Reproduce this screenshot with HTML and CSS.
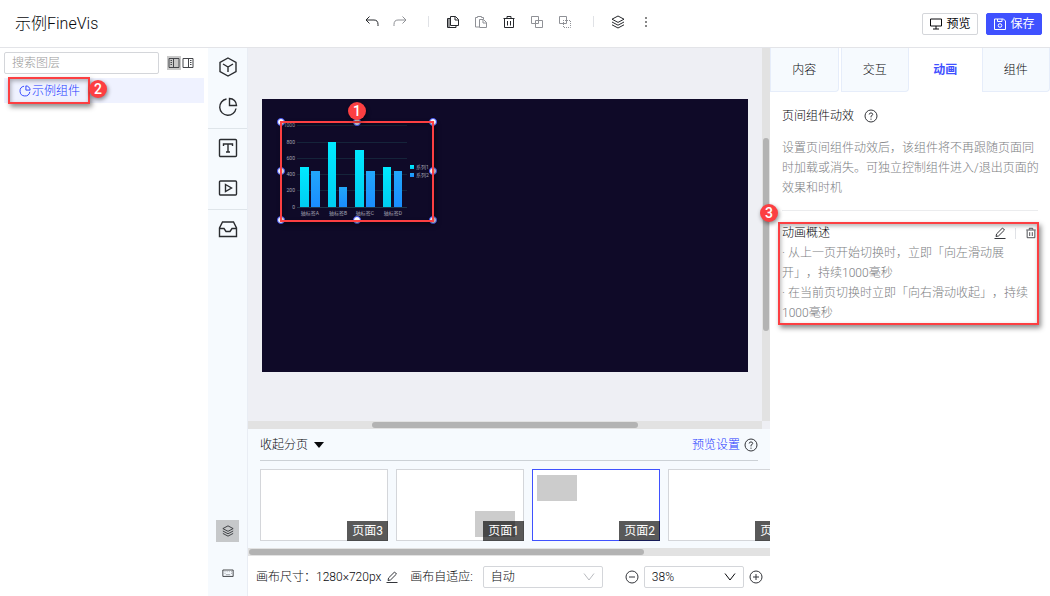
FILE: index.html
```html
<!DOCTYPE html>
<html lang="zh-CN">
<head>
    <meta charset="UTF-8">
    <meta name="viewport" content="width=device-width, initial-scale=1.0">
    <title>示例FineVis</title>
    <link rel="stylesheet" href="styles.css">
</head>
<body>
    <!-- 公用图标 -->
    <svg class="sprite" aria-hidden="true">
        <symbol id="i-pie" viewBox="0 0 20 20"><path d="M8.5 2A8.2 8.2 0 1 0 18 11.5M11.500 1.500V8.500H18.500A7 7 0 0 0 11.500 1.500Z"/></symbol>
        <symbol id="i-trash" viewBox="0 0 14 14"><path d="M1.500 3.500H12.500M5 3V1.500H9V3M2.500 4V12.500H11.500V4M5.500 6V10.500M8.500 6V10.500"/></symbol>
        <symbol id="i-layers" viewBox="0 0 14 14"><path d="M7 1L13 4.200L7 7.400L1 4.200ZM1 7L7 10.200L13 7M1 9.800L7 13L13 9.800"/></symbol>
        <symbol id="i-pencil" viewBox="0 0 12 12"><path d="M2 9.500L2.600 6.900L8.500 1L10.500 3L4.600 8.900ZM0.500 11.500H11.500"/></symbol>
        <symbol id="i-help" viewBox="0 0 14 14"><circle cx="7" cy="7" r="6"/><path d="M5.200 5.500Q5.300 3.900 7 3.900Q8.800 4 8.700 5.500Q8.600 6.400 7 7.200V8.400M7 9.600V10.800"/></symbol>
        <symbol id="i-down" viewBox="0 0 12 12"><path d="M1 2.500L6 9L11 2.500"/></symbol>
    </svg>

    <header class="topbar">
        <h1 class="doc-title">示例FineVis</h1>
        <div class="tools">
            <button class="tool" aria-label="撤销"><svg viewBox="0 0 14 14"><path d="M4.500 1.500L1 5L4.500 8.500M1 5H9Q13 5 13 9.500V11"/></svg></button>
            <button class="tool off" aria-label="重做"><svg viewBox="0 0 14 14"><path d="M9.500 1.500L13 5L9.500 8.500M13 5H5Q1 5 1 9.500V11"/></svg></button>
            <span class="sep"></span>
            <button class="tool" aria-label="复制"><svg viewBox="0 0 14 14"><path d="M4.500 1.500H9.500L12.500 4.500V10.500H4.500ZM9 1.500V5H12.500M4 3.500H1.500V12.500H10V11M3 3.500V12"/></svg></button>
            <button class="tool off" aria-label="粘贴"><svg viewBox="0 0 14 14"><path d="M5 12H1.500V2.500H3.500V1.500H7.500V2.500H9.500V4M5.500 4.500H9.500L12.500 7.500V12.500H5.500ZM9 4.500V8H12.500"/></svg></button>
            <button class="tool" aria-label="删除"><svg><use href="#i-trash"/></svg></button>
            <button class="tool off" aria-label="组合"><svg viewBox="0 0 14 14"><path d="M1.500 1.500H8.500V8.500H1.500ZM5.500 5.500H12.500V12.500H5.500Z"/></svg></button>
            <button class="tool off" aria-label="取消组合"><svg viewBox="0 0 14 14"><path d="M1.500 1.500H8.500V8.500H1.500Z"/><path stroke-dasharray="1 1" d="M5 5.500H12.500V12.500H5.500V5"/></svg></button>
            <span class="sep"></span>
            <button class="tool" aria-label="图层"><svg><use href="#i-layers"/></svg></button>
            <button class="tool" aria-label="更多"><svg class="dots" viewBox="0 0 14 14"><path d="M6 2H8V4H6ZM6 6H8V8H6ZM6 10H8V12H6Z"/></svg></button>
        </div>
        <div class="actions">
            <button class="btn"><svg viewBox="0 0 14 14"><path d="M1.500 2H12.500V9H1.500ZM7 9V12M4 12H10"/></svg>预览</button>
            <button class="btn primary"><svg viewBox="0 0 14 14"><path d="M1.500 2H10.500L12.500 4V12.500H1.500ZM4.500 2V4.500H9V2"/><circle cx="7" cy="8.500" r="1.800"/></svg>保存</button>
        </div>
    </header>

    <main class="workspace">
        <aside class="layers">
            <div class="search-row">
                <input class="search" type="text" placeholder="搜索图层" aria-label="搜索图层">
                <button class="dock active" aria-label="停靠左侧"><svg viewBox="0 0 12 12"><path d="M1 1.500H11V10.500H1ZM5.500 1.500V10.500M2.500 3.500H4M2.500 5.500H4M2.500 7.500H4"/></svg></button>
                <button class="dock" aria-label="停靠右侧"><svg viewBox="0 0 12 12"><path d="M1 1.500H11V10.500H1ZM6.500 1.500V10.500M8 3.500H9.500M8 5.500H9.500M8 7.500H9.500"/></svg></button>
            </div>
            <button class="layer-item">
                <svg><use href="#i-pie"/></svg>示例组件
                <span class="callout callout-layer"></span>
                <span class="badge badge-layer">2</span>
            </button>
        </aside>

        <nav class="rail">
            <div class="rail-group">
                <button aria-label="模型"><svg viewBox="0 0 20 20"><path d="M10 1L18 5.500V14.500L10 19L2 14.500V5.500ZM5 7L10 10L15 7M10 10V15"/></svg></button>
                <button aria-label="图表"><svg><use href="#i-pie"/></svg></button>
            </div>
            <div class="rail-group">
                <button aria-label="文本"><svg viewBox="0 0 20 20"><rect x="1.500" y="1.500" width="17" height="17" rx="1"/><path d="M5.500 8V6H14.500V8M10 6V14M8 14H12"/></svg></button>
                <button aria-label="媒体"><svg viewBox="0 0 20 20"><rect x="1.500" y="3" width="17" height="14" rx="1"/><path d="M7.500 6.500L13.500 10L7.500 13.500Z"/></svg></button>
            </div>
            <div class="rail-group">
                <button aria-label="资源"><svg viewBox="0 0 20 20"><path d="M4.500 3H15.500L18.500 9V17.500H1.500V9ZM1.500 9.500H6L8 12.500H12L14 9.500H18.500"/></svg></button>
            </div>
            <div class="rail-bottom">
                <button class="active" aria-label="图层面板"><svg><use href="#i-layers"/></svg></button>
                <button aria-label="快捷键"><svg viewBox="0 0 14 14"><path d="M1 3.500H13V11H1Z"/><path class="faint" d="M3 5.500H4M5.500 5.500H6.500M8 5.500H9M10.500 5.500H11.500M3 7.500H4M10.500 7.500H11.500M4.500 9H9.500"/></svg></button>
            </div>
        </nav>

        <section class="editor">
            <div class="canvas">
                <div class="stage-wrap">
                    <div class="stage">
                        <div class="widget">
                            <svg class="chart" viewBox="0 0 152 98">
                                <defs>
                                    <linearGradient id="cyan" x2="0" y2="1"><stop stop-color="#00eaff"/><stop offset="1" stop-color="#00cdf2"/></linearGradient>
                                    <linearGradient id="blue" x2="0" y2="1"><stop stop-color="#22a7fa"/><stop offset="1" stop-color="#1a8dff"/></linearGradient>
                                </defs>
                                <path class="grid" d="M16 3.500H126M16 20.500H126M16 36.500H126M16 52.500H126M16 68.500H126"/>
                                <path class="axis" d="M16 85.500H126"/>
                                <g fill="url(#cyan)">
                                    <rect x="19" y="45" width="9" height="40"/>
                                    <rect x="47" y="20" width="8" height="65"/>
                                    <rect x="74" y="28" width="9" height="57"/>
                                    <rect x="102" y="45" width="8" height="40"/>
                                    <rect x="129" y="43" width="4" height="4"/>
                                </g>
                                <g fill="url(#blue)">
                                    <rect x="30" y="49" width="9" height="36"/>
                                    <rect x="58" y="65" width="8" height="20"/>
                                    <rect x="85" y="49" width="9" height="36"/>
                                    <rect x="113" y="49" width="8" height="36"/>
                                    <rect x="129" y="51" width="4" height="4"/>
                                </g>
                                <g class="y-labels">
                                    <text x="14" y="5">1000</text>
                                    <text x="14" y="22">800</text>
                                    <text x="14" y="38">600</text>
                                    <text x="14" y="54">400</text>
                                    <text x="14" y="70">200</text>
                                    <text x="14" y="87">0</text>
                                </g>
                                <g class="x-labels">
                                    <text x="29" y="93">轴标签A</text>
                                    <text x="57" y="93">轴标签B</text>
                                    <text x="84" y="93">轴标签C</text>
                                    <text x="112" y="93">轴标签D</text>
                                </g>
                                <g class="legend">
                                    <text x="135" y="47">系列1</text>
                                    <text x="135" y="55">系列2</text>
                                </g>
                            </svg>
                            <i class="handle tl"></i><i class="handle tc"></i><i class="handle tr"></i>
                            <i class="handle ml"></i><i class="handle mr"></i>
                            <i class="handle bl"></i><i class="handle bc"></i><i class="handle br"></i>
                            <span class="callout callout-widget"></span>
                            <span class="badge badge-widget">1</span>
                        </div>
                    </div>
                </div>
                <div class="vbar"><span class="vthumb"></span></div>
                <div class="hbar"><span class="hthumb canvas-thumb"></span></div>
            </div>

            <div class="pages">
                <div class="pages-head">
                    <button class="collapse">收起分页 <svg viewBox="0 0 10 6"><path d="M0 0H10L5 6Z"/></svg></button>
                    <a class="preview-link" href="#">预览设置</a>
                    <svg class="help"><use href="#i-help"/></svg>
                </div>
                <div class="page-list">
                    <button class="page"><span class="page-name">页面3</span></button>
                    <button class="page"><span class="block block-br"></span><span class="page-name">页面1</span></button>
                    <button class="page current"><span class="block block-tl"></span><span class="page-name">页面2</span></button>
                    <button class="page"><span class="page-name">页面4</span></button>
                </div>
                <div class="hbar"><span class="hthumb pages-thumb"></span></div>
            </div>

            <footer class="statusbar">
                <span>画布尺寸：1280×720px</span>
                <button class="icon-btn" aria-label="编辑尺寸"><svg><use href="#i-pencil"/></svg></button>
                <label for="fit">画布自适应:</label>
                <div class="select fit">
                    <select id="fit"><option>自动</option></select>
                    <svg><use href="#i-down"/></svg>
                </div>
                <button class="icon-btn zoom-out" aria-label="缩小"><svg viewBox="0 0 14 14"><circle cx="7" cy="7" r="6"/><path d="M4 7H10"/></svg></button>
                <div class="select zoom">
                    <select aria-label="缩放比例"><option>38%</option></select>
                    <svg><use href="#i-down"/></svg>
                </div>
                <button class="icon-btn zoom-in" aria-label="放大"><svg viewBox="0 0 14 14"><circle cx="7" cy="7" r="6"/><path d="M4 7H10M7 4V10"/></svg></button>
            </footer>
        </section>

        <aside class="props">
            <div class="tabs">
                <button class="tab">内容</button>
                <button class="tab">交互</button>
                <button class="tab active">动画</button>
                <button class="tab">组件</button>
            </div>
            <section class="intro">
                <h2>页间组件动效 <svg class="help"><use href="#i-help"/></svg></h2>
                <p>设置页间组件动效后，该组件将不再跟随页面同时加载或消失。可独立控制组件进入/退出页面的效果和时机</p>
            </section>
            <section class="overview">
                <div class="overview-head">
                    <h2>动画概述</h2>
                    <button class="icon-btn" aria-label="编辑动画"><svg><use href="#i-pencil"/></svg></button>
                    <span class="sep"></span>
                    <button class="icon-btn" aria-label="删除动画"><svg><use href="#i-trash"/></svg></button>
                </div>
                <p>· 从上一页开始切换时，立即「向左滑动展开」，持续1000毫秒</p>
                <p>· 在当前页切换时立即「向右滑动收起」，持续1000毫秒</p>
                <span class="callout callout-overview"></span>
                <span class="badge badge-overview">3</span>
            </section>
        </aside>
    </main>
</body>
</html>
```
FILE: styles.css
```css
* {
    box-sizing: border-box;
}
body {
    margin: 0;
    height: 100vh;
    display: flex;
    flex-direction: column;
    overflow: hidden;
    background: #fff;
    color: #08090c;
    font-family: Roboto, "Noto Sans CJK SC", sans-serif;
    font-size: 12px;
    font-weight: 300;
    line-height: 20px;
    text-spacing-trim: space-all;
}
h1, h2, p {
    margin: 0;
    font-weight: inherit;
}
h2 {
    font-size: 12px;
}
button {
    padding: 0;
    border: none;
    background: none;
    color: inherit;
    font: inherit;
    cursor: pointer;
}
svg {
    display: block;
    width: 14px;
    height: 14px;
    fill: none;
    stroke: currentColor;
    flex: none;
}
.sprite {
    position: absolute;
    width: 0;
    height: 0;
}

/* 顶部工具栏 */
.topbar {
    flex: none;
    height: 48px;
    display: grid;
    grid-template-columns: 248px 1fr 280px;
    align-items: center;
    border-bottom: 1px solid #e3e4e8;
}
.doc-title {
    padding-left: 15px;
    font-size: 16px;
}
.tools {
    display: flex;
    justify-content: center;
    align-items: center;
    padding-bottom: 4px;
}
.tool {
    width: 28px;
    height: 28px;
    display: grid;
    place-items: center;
    color: #26282c;
}
.tool.off {
    color: #8f9196;
}
.dots {
    fill: #888;
    stroke: none;
}
.sep {
    width: 1px;
    height: 11px;
    background: #e0e2e6;
}
.tools .sep {
    margin: 0 10px 0 14px;
}
.actions {
    display: flex;
    justify-content: flex-end;
    gap: 8px;
    padding-right: 8px;
}
.btn {
    width: 56px;
    height: 22px;
    display: flex;
    align-items: center;
    justify-content: center;
    gap: 3px;
    border: 1px solid #d4d6da;
    border-radius: 2px;
    font-weight: 400;
}
.btn.primary {
    border-color: #3f51ff;
    background: #3f51ff;
    color: #fff;
}

.workspace {
    flex: 1;
    min-height: 0;
    display: grid;
    grid-template-columns: 208px 40px minmax(0, 1fr) 280px;
}

/* 图层面板 */
.layers {
    padding: 4px;
}
.search-row {
    display: flex;
    align-items: center;
    margin-bottom: 4px;
}
.search {
    width: 155px;
    height: 22px;
    margin-right: 8px;
    padding: 0 7px;
    border: 1px solid #d4d6da;
    border-radius: 2px;
    font: inherit;
}
.search::placeholder {
    color: #999;
}
.dock {
    padding: 1px;
    color: #44464a;
}
.dock svg {
    width: 12px;
    height: 12px;
}
.dock.active {
    background: #c9c9c9;
}
.layer-item {
    position: relative;
    width: 100%;
    height: 25px;
    display: flex;
    align-items: center;
    gap: 1px;
    padding-left: 15px;
    background: #eff2ff;
    color: #2438ff;
}
.layer-item svg {
    width: 12px;
    height: 12px;
    stroke-width: 1.5;
}

/* 标注 */
.callout {
    position: absolute;
    border: 2px solid #fc3f42;
    box-shadow: 2px 3px 5px rgba(0, 0, 0, 0.45), inset 1px 2px 4px rgba(0, 0, 0, 0.3);
    pointer-events: none;
}
.badge {
    position: absolute;
    width: 18px;
    height: 18px;
    border-radius: 50%;
    background: #fc3f42;
    color: #fff;
    font-size: 14px;
    font-weight: 500;
    line-height: 18px;
    text-align: center;
    box-shadow: 1px 2px 4px rgba(0, 0, 0, 0.45);
}
.callout-layer {
    left: 4px;
    top: -1px;
    width: 82px;
    height: 27px;
}
.badge-layer {
    left: 85px;
    top: 2px;
}
.callout-widget {
    inset: -1px -1px -2px -1px;
}
.badge-widget {
    left: calc(50% - 9px);
    top: -20px;
}
.callout-overview {
    inset: -1px -1px -2px -4px;
}
.badge-overview {
    left: -22px;
    top: -19px;
}

/* 组件栏 */
.rail {
    display: flex;
    flex-direction: column;
    background: #f6fafe;
    border-right: 1px solid #e9edf4;
}
.rail button {
    color: #2a2c30;
}
.rail-group {
    display: flex;
    flex-direction: column;
    border-bottom: 1px solid #dfe5ea;
}
.rail-group:nth-child(3) {
    border-bottom: none;
}
.rail-group button {
    height: 40px;
    padding-bottom: 2px;
    display: grid;
    place-items: center;
}
.rail-group svg {
    width: 20px;
    height: 20px;
    stroke-width: 1.4;
}
.rail-bottom {
    margin-top: auto;
    padding-bottom: 12px;
    display: flex;
    flex-direction: column;
    align-items: center;
    gap: 20px;
}
.rail-bottom button {
    width: 23px;
    height: 22px;
    display: grid;
    place-items: center;
}
.rail-bottom svg {
    width: 12px;
    height: 12px;
}
.rail-bottom .active {
    background: #c6c8ca;
}
.faint {
    opacity: 0.5;
}

/* 画布 */
.editor {
    display: flex;
    flex-direction: column;
    min-height: 0;
}
.canvas {
    flex: 1;
    min-height: 0;
    display: grid;
    grid-template-columns: 1fr 8px;
    grid-template-rows: 1fr 8px;
    background: #eeeff4;
}
.stage-wrap {
    display: flex;
    align-items: center;
    padding: 2px 14px 0;
}
.stage {
    position: relative;
    width: 100%;
    aspect-ratio: 16 / 9;
    background: #0f0a28;
}
.widget {
    position: absolute;
    left: 19px;
    top: 23px;
    width: 152px;
    height: 98px;
}
.chart {
    width: 100%;
    height: 100%;
}
.chart rect, .chart text {
    stroke: none;
}
.chart text {
    fill: #a3a3b3;
    font-size: 5px;
    font-weight: 400;
}
.grid {
    stroke: #15243a;
}
.axis {
    stroke: #20364a;
}
.y-labels {
    text-anchor: end;
}
.x-labels {
    text-anchor: middle;
}
.handle {
    position: absolute;
    width: 8px;
    height: 8px;
    margin: -4px;
    border: 1px solid #3f51ff;
    border-radius: 50%;
    background: #fff;
}
.tl, .tc, .tr {
    top: 0;
}
.ml, .mr {
    top: 50%;
}
.bl, .bc, .br {
    top: 100%;
}
.tl, .ml, .bl {
    left: 0;
}
.tc, .bc {
    left: 50%;
}
.tr, .mr, .br {
    left: 100%;
}
.vbar, .hbar {
    display: flex;
    background: #e2e2e2;
}
.vthumb, .hthumb {
    border-radius: 3px;
    background: #b3b3b3;
}
.vthumb {
    width: 6px;
    height: 52%;
    margin: auto 1px;
}
.hbar {
    height: 8px;
    padding: 1px;
}
.canvas-thumb {
    width: 52%;
    margin: 0 auto;
}
.pages-thumb {
    width: 76%;
}

/* 分页 */
.pages {
    background: #f6fafe;
}
.pages-head {
    height: 32px;
    margin: 0 12px 8px;
    display: flex;
    align-items: center;
    border-bottom: 1px solid #ccd1d6;
}
.collapse {
    display: flex;
    align-items: center;
    gap: 6px;
    margin-right: auto;
}
.collapse svg {
    width: 10px;
    height: 6px;
    fill: currentColor;
    stroke: none;
}
.preview-link {
    margin-right: 4px;
    color: #2438ff;
    text-decoration: none;
}
.help {
    color: #33353a;
}
.page-list {
    display: flex;
    gap: 8px;
    padding-left: 12px;
    margin-bottom: 7px;
    overflow: hidden;
}
.page {
    position: relative;
    flex: none;
    width: 128px;
    height: 72px;
    border: 1px solid #d4d6da;
    background: #fff;
}
.page.current {
    border-color: #3f51ff;
}
.page-name {
    position: absolute;
    right: -1px;
    bottom: -1px;
    padding: 0 5px;
    background: rgba(0, 0, 0, 0.65);
    color: #fff;
    font-weight: 400;
}
.block {
    position: absolute;
    width: 40px;
    height: 26px;
    background: #ccc;
}
.block-tl {
    left: 4px;
    top: 5px;
}
.block-br {
    right: 8px;
    bottom: 3px;
}

/* 底部状态栏 */
.statusbar {
    height: 40px;
    display: flex;
    align-items: center;
    padding: 2px 0 0 8px;
    white-space: nowrap;
}
.statusbar > * {
    flex: none;
}
.icon-btn {
    color: #33353a;
}
.icon-btn svg {
    width: 12px;
    height: 12px;
}
.statusbar .icon-btn {
    margin: 0 5px;
}
.statusbar label {
    margin: 0 10px 0 7px;
}
.statusbar .zoom-out {
    margin-left: 22px;
}
.zoom-out svg, .zoom-in svg {
    width: 14px;
    height: 14px;
}
.select {
    position: relative;
}
.select.fit {
    width: 120px;
}
.select.zoom {
    width: 100px;
}
.select select {
    width: 100%;
    height: 22px;
    display: block;
    padding: 0 7px;
    border: 1px solid #d4d6da;
    border-radius: 2px;
    background: #fff;
    color: inherit;
    font: inherit;
    appearance: none;
}
.select svg {
    position: absolute;
    right: 8px;
    top: 5px;
    width: 12px;
    height: 12px;
    pointer-events: none;
}
.fit svg {
    color: #b9bbbf;
}

/* 属性面板 */
.tabs {
    display: grid;
    grid-template-columns: repeat(4, 1fr);
    gap: 2px;
    margin-bottom: 14px;
}
.tab {
    height: 44px;
    border: 1px solid #e6edfa;
    border-top: none;
    border-radius: 0 0 4px 0;
    background: #f6fafe;
}
.tab.active {
    border-color: #fff;
    background: #fff;
    color: #3f51ff;
    font-weight: 700;
}
.intro {
    margin: 0 12px;
    padding-bottom: 12px;
    border-bottom: 1px solid #ebecee;
}
.intro h2 {
    display: flex;
    align-items: center;
    gap: 10px;
    margin-bottom: 12px;
}
.intro p {
    margin-right: -4px;
}
.props p {
    color: #7c7e82;
}
.overview {
    position: relative;
    margin: 12px 12px 0;
}
.overview-head {
    display: flex;
    align-items: center;
    gap: 9px;
    padding-right: 1px;
}
.overview-head h2 {
    margin-right: auto;
}
```
